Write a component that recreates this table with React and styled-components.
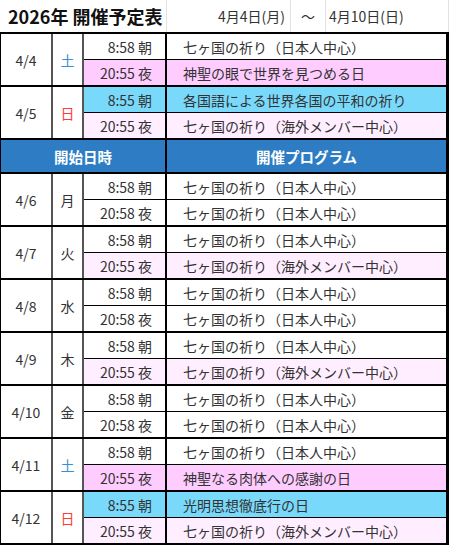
import React from 'react';
import styled, { createGlobalStyle } from 'styled-components';

const Global = createGlobalStyle`
  html, body { margin: 0; padding: 0; background: #fff; }
  body {
    font-family: "Noto Sans CJK JP", "Noto Sans", sans-serif;
    color: #333;
  }
  * { box-sizing: border-box; }
`;

const Sheet = styled.div`
  width: 449px;
`;

const TitleBar = styled.div`
  display: grid;
  grid-template-columns: 167px 124px 35px 123px;
  height: 32px;
`;

const TitleCell = styled.div`
  border-right: 1px solid #e2e2e2;
  display: flex;
  align-items: center;
  justify-content: ${p => p.$align || 'flex-start'};
  padding: 0 ${p => p.$padR || 0}px 0 ${p => p.$padL || 0}px;
  font-size: 14px;
  color: #333;
  white-space: nowrap;
`;

const Title = styled.span`
  font-size: 18px;
  font-weight: 700;
  color: #111;
  letter-spacing: 0;
`;

const Table = styled.div`
  border-left: 1px solid #000;
  border-right: 3px solid #000;
  border-top: 2px solid #000;
`;

const Group = styled.div`
  display: grid;
  grid-template-columns: 52px 31px 83px 1fr;
  grid-template-rows: 26px 25px;
  border-bottom: 2px solid #000;
`;

const DateCell = styled.div`
  grid-row: span 2;
  border-right: 2px solid #555;
  display: flex;
  align-items: center;
  justify-content: center;
  font-size: 14px;
  background: #fff;
`;

const WeekCell = styled(DateCell)`
  color: ${p => p.$color || '#333'};
`;

const TimeCell = styled.div`
  border-right: 2px solid #000;
  border-bottom: ${p => (p.$first ? '1px solid #000' : 'none')};
  background: ${p => p.$bg};
  display: flex;
  align-items: center;
  justify-content: flex-end;
  padding-right: 13px;
  font-size: 14px;
  white-space: nowrap;
`;

const ProgramCell = styled.div`
  border-bottom: ${p => (p.$first ? '1px solid #000' : 'none')};
  background: ${p => p.$bg};
  display: flex;
  align-items: center;
  padding-left: 16px;
  font-size: 14px;
  white-space: nowrap;
`;

const SectionHeader = styled.div`
  display: grid;
  grid-template-columns: 166px 1fr;
  height: 34px;
  border-bottom: 2px solid #000;
  background: #2e7dc4;
  color: #fff;
  font-weight: 700;
  font-size: 14.5px;
`;

const HeaderCell = styled.div`
  display: flex;
  align-items: center;
  justify-content: center;
  border-right: ${p => (p.$divider ? '2px solid #000' : 'none')};
`;

const BG = {
  w: '#ffffff',
  pink: '#ffccff',
  lpink: '#ffeeff',
  blue: '#78d9fb',
};

const JP = '七ヶ国の祈り（日本人中心）';
const OV = '七ヶ国の祈り（海外メンバー中心）';

const top = [
  { d: '4/4', w: '土', c: '#3a8fd8', r: [['8:58 朝', JP, 'w'], ['20:55 夜', '神聖の眼で世界を見つめる日', 'pink']] },
  { d: '4/5', w: '日', c: '#ff3b3b', r: [['8:55 朝', '各国語による世界各国の平和の祈り', 'blue'], ['20:55 夜', OV, 'lpink']] },
];

const rest = [
  { d: '4/6', w: '月', r: [['8:58 朝', JP, 'w'], ['20:58 夜', JP, 'w']] },
  { d: '4/7', w: '火', r: [['8:58 朝', JP, 'w'], ['20:55 夜', OV, 'lpink']] },
  { d: '4/8', w: '水', r: [['8:58 朝', JP, 'w'], ['20:58 夜', JP, 'w']] },
  { d: '4/9', w: '木', r: [['8:58 朝', JP, 'w'], ['20:55 夜', OV, 'lpink']] },
  { d: '4/10', w: '金', r: [['8:58 朝', JP, 'w'], ['20:58 夜', JP, 'w']] },
  { d: '4/11', w: '土', c: '#3a8fd8', r: [['8:58 朝', JP, 'w'], ['20:55 夜', '神聖なる肉体への感謝の日', 'pink']] },
  { d: '4/12', w: '日', c: '#ff3b3b', r: [['8:55 朝', '光明思想徹底行の日', 'blue'], ['20:55 夜', OV, 'lpink']] },
];

function DayGroup({ g }) {
  const [a, b] = g.r;
  return (
    <Group>
      <DateCell>{g.d}</DateCell>
      <WeekCell $color={g.c}>{g.w}</WeekCell>
      <TimeCell $first $bg={BG[a[2]]}>{a[0]}</TimeCell>
      <ProgramCell $first $bg={BG[a[2]]}>{a[1]}</ProgramCell>
      <TimeCell $bg={BG[b[2]]}>{b[0]}</TimeCell>
      <ProgramCell $bg={BG[b[2]]}>{b[1]}</ProgramCell>
    </Group>
  );
}

export default function App() {
  return (
    <>
      <Global />
      <Sheet>
        <TitleBar>
          <TitleCell $padL={8}><Title>2026年 開催予定表</Title></TitleCell>
          <TitleCell $align="flex-end" $padR={5}>4月4日(月)</TitleCell>
          <TitleCell $align="center">～</TitleCell>
          <TitleCell $padL={3}>4月10日(日)</TitleCell>
        </TitleBar>
        <Table>
          {top.map(g => <DayGroup key={g.d} g={g} />)}
          <SectionHeader>
            <HeaderCell $divider>開始日時</HeaderCell>
            <HeaderCell>開催プログラム</HeaderCell>
          </SectionHeader>
          {rest.map(g => <DayGroup key={g.d} g={g} />)}
        </Table>
      </Sheet>
    </>
  );
}
